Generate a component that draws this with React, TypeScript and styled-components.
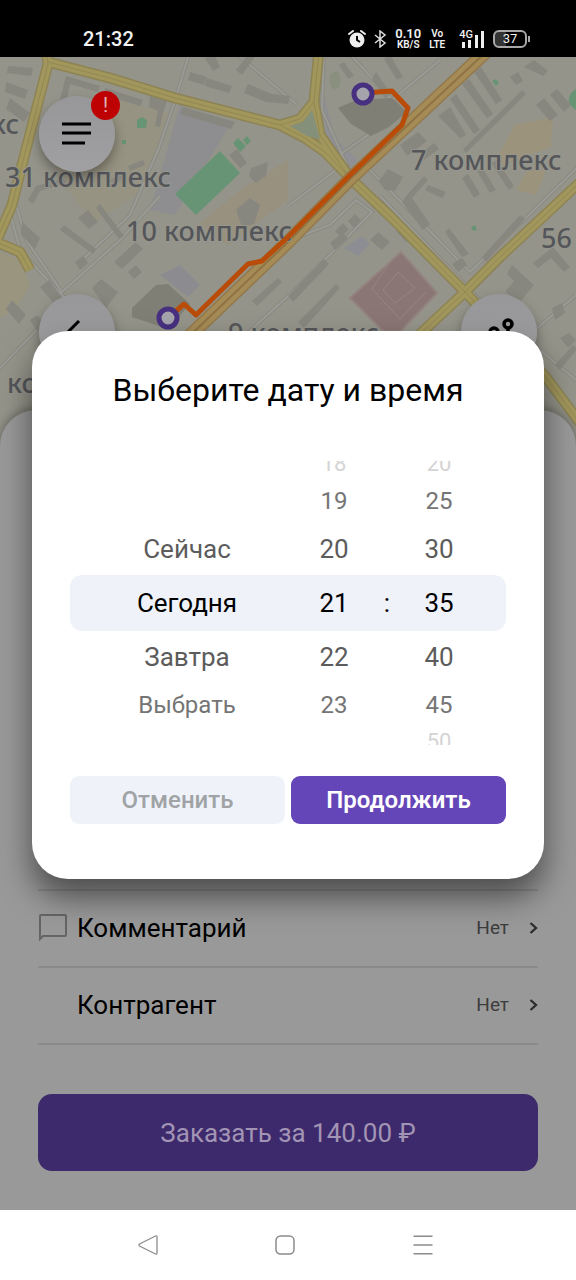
import React from "react";
import styled, { createGlobalStyle } from "styled-components";

const GlobalStyle = createGlobalStyle`
  *, *::before, *::after { box-sizing: border-box; }
  body { margin: 0; background: #fff; font-family: Roboto, "Liberation Sans", sans-serif; }
  button { font: inherit; border: 0; padding: 0; background: none; cursor: pointer; }
`;

const Screen = styled.div`
  display: flex;
  flex-direction: column;
  min-height: 100vh;
`;

const AppArea = styled.div`
  position: relative;
  flex: 1;
  display: flex;
  flex-direction: column;
  overflow: hidden;
`;

/* ---------- status bar ---------- */

const StatusBar = styled.header`
  display: flex;
  justify-content: space-between;
  align-items: center;
  height: 57px;
  padding: 20px 46px 0 83px;
  background: #000;
  color: #f2f2f2;
`;

const Clock = styled.time`
  font-size: 20px;
  line-height: 24px;
  font-weight: 500;
`;

const StatusIcons = styled.div`
  display: flex;
  align-items: center;
  gap: 8px;
`;

const Stacked = styled.span<{ $size: number }>`
  display: flex;
  flex-direction: column;
  align-items: center;
  font-size: ${(p) => p.$size}px;
  line-height: 12px;
  font-weight: 600;

  small {
    font-size: 10px;
    line-height: 10px;
  }
`;

const Signal = styled.span`
  display: flex;
  align-items: flex-start;
  margin-left: 6px;
  font-size: 11px;
  line-height: 10px;
  font-weight: 500;

  svg {
    margin-left: -13px;
  }
`;

const Battery = styled.span`
  display: flex;
  align-items: center;
  gap: 1px;
  font-size: 13px;
  line-height: 14px;

  b {
    width: 34px;
    border: 2px solid #a8a8a8;
    border-radius: 6px;
    text-align: center;
    font-weight: 400;
    background: linear-gradient(90deg, #333 36%, #000 36%);
  }

  &::after {
    content: "";
    width: 2px;
    height: 6px;
    background: #a8a8a8;
  }
`;

/* ---------- map ---------- */

const MapArea = styled.section`
  position: relative;
  height: 393px;
  background: #94948a;
`;

const MapSvg = styled.svg`
  display: block;
  width: 100%;
  height: 100%;
`;

const MapControls = styled.div`
  position: absolute;
  inset: 0;
  display: flex;
  flex-direction: column;
  gap: 122px;
  padding: 39px 39px 0;
`;

const ControlRow = styled.div`
  display: flex;
  justify-content: space-between;
`;

const RoundButton = styled.button`
  position: relative;
  display: flex;
  align-items: center;
  justify-content: center;
  width: 76px;
  height: 76px;
  border-radius: 50%;
  background: linear-gradient(#979799, #a0a0a2);
  box-shadow: 0 6px 12px rgba(0, 0, 0, 0.35);
`;

const Badge = styled.span`
  position: absolute;
  top: -5px;
  right: -5px;
  width: 29px;
  height: 29px;
  border-radius: 50%;
  background: #be0204;
  color: #dcb4b4;
  font-size: 20px;
  line-height: 28px;
  text-align: center;
`;

/* ---------- order sheet ---------- */

const Sheet = styled.section`
  position: relative;
  flex: 1;
  display: flex;
  flex-direction: column;
  justify-content: flex-end;
  margin-top: -40px;
  padding: 0 38px 39px;
  border-radius: 36px 36px 0 0;
  background: #999;
  box-shadow: 0 -2px 10px rgba(0, 0, 0, 0.3);
`;

const OptionList = styled.div`
  border-top: 2px solid #8a8a8a;
`;

const OptionRow = styled.button`
  display: flex;
  align-items: center;
  width: 100%;
  height: 77px;
  padding-bottom: 2px;
  border-bottom: 2px solid #8a8a8a;
  color: #000;
  text-align: left;
`;

const OptionIcon = styled.span`
  display: flex;
  width: 39px;
`;

const OptionName = styled.span`
  flex: 1;
  font-size: 26px;
  line-height: 32px;
`;

const OptionValue = styled.span`
  margin-right: 20px;
  font-size: 19px;
  line-height: 24px;
  color: #3c3c3c;
`;

const OrderButton = styled.button`
  height: 77px;
  margin-top: 49px;
  border-radius: 14px;
  background: #3d2a6c;
  color: #a294b4;
  font-size: 26px;
`;

/* ---------- dialog ---------- */

const DialogLayer = styled.div`
  position: absolute;
  inset: 0;
  display: flex;
  align-items: center;
  justify-content: center;
  padding: 0 32px;
`;

const Dialog = styled.div`
  flex: 1;
  padding: 39px 38px 55px;
  border-radius: 36px;
  background: #fff;
  box-shadow: 0 18px 32px rgba(0, 0, 0, 0.5);
`;

const DialogTitle = styled.h1`
  margin: 0 0 51px;
  font-size: 32px;
  line-height: 40px;
  font-weight: 400;
  text-align: center;
  color: #000;
`;

const Wheel = styled.div`
  display: flex;
  flex-direction: column;
`;

type Level = 0 | 1 | 2 | 3;
const levels = [
  { height: 56, size: 26, color: "#000" },
  { height: 52, size: 26, color: "#5c5c5c" },
  { height: 44, size: 24, color: "#757575" },
  { height: 18, size: 22, color: "#d4d4d4" },
];

const WheelRow = styled.div<{ $level: Level; $top?: boolean }>`
  display: grid;
  grid-template-columns: 234fr 60fr 46fr 58fr 38fr;
  grid-template-rows: 100%;
  justify-items: center;
  align-items: ${(p) => (p.$level < 3 ? "center" : p.$top ? "end" : "start")};
  height: ${(p) => levels[p.$level].height}px;
  padding: ${(p) => (p.$level < 3 ? "0" : p.$top ? "0 0 3px" : "3px 0 0")};
  overflow: hidden;
  border-radius: ${(p) => (p.$level === 0 ? 12 : 0)}px;
  background: ${(p) => (p.$level === 0 ? "#eff3f9" : "transparent")};
  color: ${(p) => levels[p.$level].color};
  font-size: ${(p) => levels[p.$level].size}px;
  line-height: 24px;
`;

const WheelItem = styled.button`
  color: inherit;
  line-height: inherit;
`;

const Actions = styled.div`
  display: grid;
  grid-template-columns: 1fr 1fr;
  gap: 6px;
  margin-top: 31px;
`;

const ActionButton = styled.button<{ $primary?: boolean }>`
  height: 48px;
  border-radius: 9px;
  background: ${(p) => (p.$primary ? "#6446b8" : "#eff3f9")};
  color: ${(p) => (p.$primary ? "#fff" : "#a0a3a6")};
  font-size: 24px;
  font-weight: ${(p) => (p.$primary ? 600 : 500)};
`;

/* ---------- system navigation ---------- */

const NavBar = styled.nav`
  display: grid;
  grid-template-columns: repeat(3, 1fr);
  height: 70px;
  padding: 0 84px 0 79px;
  background: #fff;
`;

const NavButton = styled.button`
  display: flex;
  align-items: center;
  justify-content: center;
`;

const wheelRows: { level: Level; top?: boolean; date: string; hour: string; minute: string }[] = [
  { level: 3, top: true, date: "", hour: "18", minute: "20" },
  { level: 2, date: "", hour: "19", minute: "25" },
  { level: 1, date: "Сейчас", hour: "20", minute: "30" },
  { level: 0, date: "Сегодня", hour: "21", minute: "35" },
  { level: 1, date: "Завтра", hour: "22", minute: "40" },
  { level: 2, date: "Выбрать", hour: "23", minute: "45" },
  { level: 3, date: "", hour: "", minute: "50" },
];

const options = [
  { name: "Комментарий", value: "Нет", comment: true },
  { name: "Контрагент", value: "Нет", comment: false },
];

const mapLabels = [
  { x: -9, y: 134, text: "кс" },
  { x: 5, y: 187, text: "31 комплекс" },
  { x: 126, y: 241, text: "10 комплекс" },
  { x: 411, y: 170, text: "7 комплекс" },
  { x: 541, y: 248, text: "56" },
  { x: 228, y: 343, text: "9 комплекс" },
  { x: 7, y: 393, text: "ко" },
];

const yellowRoads = [
  "M46 50L48 64L22 165L12 205L-4 242",
  "M48 62L110 78L175 98L280 125L300 119L314 102L319 50",
  "M280 125L305 138L325 152L350 178L392 218L465 292L545 376L590 436",
  "M314 102L320 135L350 178",
  "M590 173L500 257L465 292L420 334L380 372",
  "M-4 242L20 252L30 270",
];

const minorRoads = [
  "M190 50L176 98L158 150L130 215L80 262",
  "M8 205L20 250L66 300L-4 372",
  "M12 190L26 240L62 292L120 240L160 196",
  "M60 292L140 390",
  "M288 206L336 170L342 160",
  "M290 240L330 225L356 200L372 212L300 285L240 340",
  "M324 50L322 110L348 168",
  "M346 50L398 106L375 130L335 158",
  "M380 196L480 300L576 380",
  "M580 165L470 272L360 160",
  "M440 60L380 110",
  "M500 360L576 295",
  "M232 50L296 104",
];

const buildings = [
  "M6 82l22 8-3 9-20-7zM8 66l25 2-2 8-24-3zM10 98l20 15-6 9-18-13z",
  "M66 76l34 10-2 6-28-8-4 20-7-1zM105 88l38 12-3 6-36-11z",
  "M190 72l17 5-3 8-16-5zM207 78l25 8-3 7-24-7zM248 84l24 10 18 2-2 8-22-2-22-9z",
  "M183 107l52 15-4 7-51-15zM205 58l8 13 7-4-6-13zM236 70l12-15 8 0-14 20z",
  "M150 96l17 5-4 12-3 14-5-1 3-15-9-4z",
  "M237 149l10 14-7 5-11-13zM251 168l17-6-2 14-10 7-7-7zM236 210l14-12 10 7-6 19-12 3z",
  "M128 166l15-6 2 5-15 6zM110 180l12-7 3 5-12 7zM78 218l10-8 10 12-9 7z",
  "M22 222l18 16-5 11-14-14zM28 200l8-14 28-8 2 5-26 8-7 13z",
  "M60 230l4-5 32 24-3 5zM96 208l4-4 24 32-5 3z",
  "M40 287l9-7 15 20-8 6zM75 262l8-6 5 7-8 7zM92 288l9-9 17 13-12 16z",
  "M114 262l22-20 7 7-21 20zM128 272l8-7 6 7-8 7z",
  "M12 300l14 15-7 9-13-15zM30 320l7-5 8 8-8 8zM52 328l13-11 6 8-12 11z",
  "M376 72l15 22-6 4-13-19zM390 55l13 22-6 3-13-21zM344 62l10 14-6 3-9-14z",
  "M438 116l12-9 16 28-6 3zM450 99l6-5 24 36-6 4zM462 84l7-5 24 35-6 4zM474 72l7-5 21 33-6 4z",
  "M400 145l18-13 9 9-20 15zM420 154l14-11 5 6-15 11z",
  "M463 149l59-59 4 4-60 59zM536 105l8-7 14 17-8 6zM550 95l7-6 14 16-7 7z",
  "M524 67l10-7 14 11-5 5zM510 77l8-5 5 9-7 4z",
  "M379 181l9-12 15 8-8 14-10-1zM406 196l18-20 4 4-16 18 18 26-7 6-21-28z",
  "M428 185l18 7-4 6-17-8zM462 178l6-4 12 20-6 4zM477 171l5-4 14 23-6 3zM491 163l6-3 17 26-5 4z",
  "M449 228l20 26-7 3-17-25zM482 257l38-42 5 4-39 43z",
  "M288 296l36-37 5 5-36 38zM302 283l12-12 4 5-12 11zM298 322l38-38 4 4-36 40z",
  "M335 231l8-8 6 6-8 8zM348 221l7-7 6 6-7 8zM330 243l13-10 5 5-13 12z",
  "M370 240l8-8 12 10-8 8zM396 231l6-5 10 10-6 6zM452 264l10-6 5 7-9 7z",
  "M512 265l22 20-14 17-15-10 9-11-7-7zM533 263l20-16 17 20-6 5-13-14-13 10z",
  "M552 308l10-5 3 10-10 7zM560 338l9-5 7 7-8 8zM555 365l18-20 4 4-17 21z",
  "M245 280l12-11 5 5-12 12zM252 301l26-23 4 4-25 24zM221 298l9-8 4 5-9 8z",
];

const highway = "M488 50L350 179L288 242L180 345";

function CityMap() {
  return (
    <MapSvg viewBox="0 57 576 393" preserveAspectRatio="xMidYMin slice" role="img" aria-label="Карта">
      <rect y="50" width="576" height="400" fill="#94948a" />
      <path d="M100 95l70 18-25 75-50 35-42-50z" fill="#979382" />
      <path d="M240 190l48-30v40l-60 45-30-20z" fill="#989180" />
      <path d="M515 125l38-8-2 30-60 22zM528 170l18 0-10 25-20-5z" fill="#9b937c" />
      <path d="M-5 250l25 10 10 25-15 25-20 10z" fill="#9a957f" />
      <path d="M180 105l50 20-55 90-25-5z" fill="#8e8e91" />
      <path d="M322 90l14 50 22 20-10 10-22-24z" fill="#8f8f94" />
      <path d="M344 248l18-12 8 8-12 12z" fill="#8c8e94" />
      <path d="M160 275l20-10 20 20-12 12z" fill="#8c8c90" />
      <path d="M330 75q8-8 10 2t-4 12q-8 0-6-14z" fill="#89917e" />

      <g fill="none" stroke="#8a8a83" strokeWidth="4">
        {minorRoads.map((d) => <path key={d} d={d} />)}
      </g>
      <g fill="none" stroke="#9b9b95" strokeWidth="2">
        {minorRoads.map((d) => <path key={d} d={d} />)}
      </g>

      <g fill="#87877f">
        {buildings.map((d) => <path key={d} d={d} />)}
      </g>
      <g fill="#807f76">
        <path d="M338 108l18-8 36-2 15 14-18 15-18 9-20-12z" />
        <path d="M132 308l24-23 12-1 22 20-22 25-36-12z" />
      </g>

      <path d="M220 151l20 22-44 42-21-21z" fill="#679475" />
      <path d="M233 143l5-5 8 8-6 6zM243 140l4-4 4 5-4 4zM137 120l5-3 5 3-1 8h-9zM122 140h4v4h-4zM492 81l4-2 3 4-3 3zM471 227l4-2 2 5-4 1z" fill="#679475" />
      <path d="M576 89q-12 8-4 18l4 3z" fill="#679475" />
      <path d="M401 252l36 41-40 42-14-4-33-33z" fill="#8a7674" stroke="#94837e" strokeWidth="2" />
      <path d="M398 272l17 16-20 15-12-13zM390 262l-18 27 28 30 26-27" fill="none" stroke="#958784" strokeWidth="1" />

      <g fill="none" stroke="#8d8355" strokeWidth="11" strokeLinejoin="round">
        {yellowRoads.map((d) => <path key={d} d={d} />)}
      </g>
      <g fill="none" stroke="#a1965c" strokeWidth="8" strokeLinejoin="round">
        {yellowRoads.map((d) => <path key={d} d={d} />)}
      </g>
      <g fill="none" stroke="#938852" strokeWidth="1" strokeLinejoin="round">
        {yellowRoads.map((d) => <path key={d} d={d} />)}
      </g>
      <path d="M290 126l13-4 9-12 8 29-13-3z" fill="#84907a" />

      <path d={highway} fill="none" stroke="#93794c" strokeWidth="14" />
      <path d={highway} fill="none" stroke="#a58b55" strokeWidth="11" />
      <path d={highway} fill="none" stroke="#8f7345" strokeWidth="2" />

      <g
        fill="#55565a"
        stroke="#96968d"
        strokeWidth="2"
        paintOrder="stroke"
        fontFamily='"Noto Sans", "Open Sans", sans-serif'
        fontSize="27"
        fontWeight="500"
      >
        {mapLabels.map((l) => (
          <text key={l.text + l.x} x={l.x} y={l.y}>{l.text}</text>
        ))}
      </g>

      <path
        d="M363 93L392 91L408 108L402 125L350 175L288 237L262 261L248 264L196 315L184 304L168 318"
        fill="none"
        stroke="#b84c08"
        strokeWidth="5"
        strokeLinejoin="round"
      />
      <g fill="#a5a3ac" stroke="#473080" strokeWidth="5">
        <circle cx="363" cy="94" r="9" />
        <circle cx="168" cy="318" r="9" />
      </g>
    </MapSvg>
  );
}

function StatusGlyphs() {
  return (
    <StatusIcons>
      <svg width="18" height="18" viewBox="0 0 18 18" aria-label="Будильник">
        <circle cx="9" cy="10" r="7.5" fill="#eee" />
        <path d="M1 4L5 1M17 4L13 1" stroke="#eee" strokeWidth="2" strokeLinecap="round" />
        <path d="M9 6v4l3 2" stroke="#000" strokeWidth="2" fill="none" />
      </svg>
      <svg width="13" height="18" viewBox="0 0 13 18" aria-label="Bluetooth">
        <path d="M1 5l10 8-5 4V1l5 4L1 13" stroke="#ddd" strokeWidth="1.5" fill="none" />
      </svg>
      <Stacked $size={13}>0.10<small>KB/S</small></Stacked>
      <Stacked $size={10}>Vo<small>LTE</small></Stacked>
      <Signal>
        4G
        <svg width="25" height="18" viewBox="0 0 25 18" aria-hidden="true">
          <path d="M2 12h3v6H2zM8 10h3v8H8zM15 5h3v13h-3zM21 1h3v17h-3z" fill="#eee" />
        </svg>
      </Signal>
      <Battery><b>37</b></Battery>
    </StatusIcons>
  );
}

export default function App() {
  return (
    <Screen>
      <GlobalStyle />
      <AppArea>
        <StatusBar>
          <Clock>21:32</Clock>
          <StatusGlyphs />
        </StatusBar>

        <MapArea>
          <CityMap />
          <MapControls>
            <ControlRow>
              <RoundButton aria-label="Меню">
                <svg width="30" height="24" viewBox="0 0 30 24">
                  <path d="M0 2h29M0 11h29M0 21h23" stroke="#000" strokeWidth="3" />
                </svg>
                <Badge>!</Badge>
              </RoundButton>
            </ControlRow>
            <ControlRow>
              <RoundButton aria-label="Назад">
                <svg width="24" height="24" viewBox="0 0 24 24">
                  <path d="M14 1L3 12L14 23" stroke="#000" strokeWidth="3" fill="none" />
                </svg>
              </RoundButton>
              <RoundButton aria-label="Маршрут">
                <svg width="32" height="30" viewBox="0 0 32 30" fill="none" stroke="#000" strokeWidth="3.5">
                  <circle cx="25" cy="7" r="4" />
                  <path d="M25 11v11a5 5 0 0 1-10 0v-7a4 4 0 0 0-8 0v5" />
                  <circle cx="7" cy="24" r="4" />
                </svg>
              </RoundButton>
            </ControlRow>
          </MapControls>
        </MapArea>

        <Sheet>
          <OptionList>
            {options.map((o) => (
              <OptionRow key={o.name}>
                <OptionIcon>
                  {o.comment && (
                    <svg width="30" height="30" viewBox="0 0 30 30" aria-hidden="true">
                      <path d="M2 26V3q0-1 1-1h24q1 0 1 1v19q0 1-1 1H5z" fill="none" stroke="#656565" strokeWidth="2" strokeLinejoin="miter" />
                    </svg>
                  )}
                </OptionIcon>
                <OptionName>{o.name}</OptionName>
                <OptionValue>{o.value}</OptionValue>
                <svg width="9" height="14" viewBox="0 0 9 14" aria-hidden="true">
                  <path d="M1.500 2L7 7L1.500 12" fill="none" stroke="#2c2c2c" strokeWidth="2.300" />
                </svg>
              </OptionRow>
            ))}
          </OptionList>
          <OrderButton>Заказать за 140.00 ₽</OrderButton>
        </Sheet>

        <DialogLayer>
          <Dialog role="dialog" aria-modal="true" aria-labelledby="dialog-title">
            <DialogTitle id="dialog-title">Выберите дату и время</DialogTitle>
            <Wheel>
              {wheelRows.map((r, i) => (
                <WheelRow key={i} $level={r.level} $top={r.top}>
                  {r.date ? <WheelItem>{r.date}</WheelItem> : <span />}
                  {r.hour ? <WheelItem>{r.hour}</WheelItem> : <span />}
                  <span>{r.level === 0 ? ":" : ""}</span>
                  <WheelItem>{r.minute}</WheelItem>
                </WheelRow>
              ))}
            </Wheel>
            <Actions>
              <ActionButton>Отменить</ActionButton>
              <ActionButton $primary>Продолжить</ActionButton>
            </Actions>
          </Dialog>
        </DialogLayer>
      </AppArea>

      <NavBar aria-label="Система">
        <NavButton aria-label="Назад">
          <svg width="20" height="20" viewBox="0 0 20 20">
            <path d="M17.500 1Q19 0.500 19 2V18Q19 19.500 17.500 19L1.500 11Q0.500 10 1.500 9Z" fill="none" stroke="#8c8c8c" strokeWidth="1.300" />
          </svg>
        </NavButton>
        <NavButton aria-label="Домой">
          <svg width="20" height="20" viewBox="0 0 20 20">
            <rect x="1" y="1" width="18" height="18" rx="4.500" fill="none" stroke="#8c8c8c" strokeWidth="1.500" />
          </svg>
        </NavButton>
        <NavButton aria-label="Недавние">
          <svg width="20" height="20" viewBox="0 0 20 20">
            <path d="M0.500 1.200h19M0.500 10h19M0.500 18.800h19" stroke="#8c8c8c" strokeWidth="1.500" />
          </svg>
        </NavButton>
      </NavBar>
    </Screen>
  );
}
